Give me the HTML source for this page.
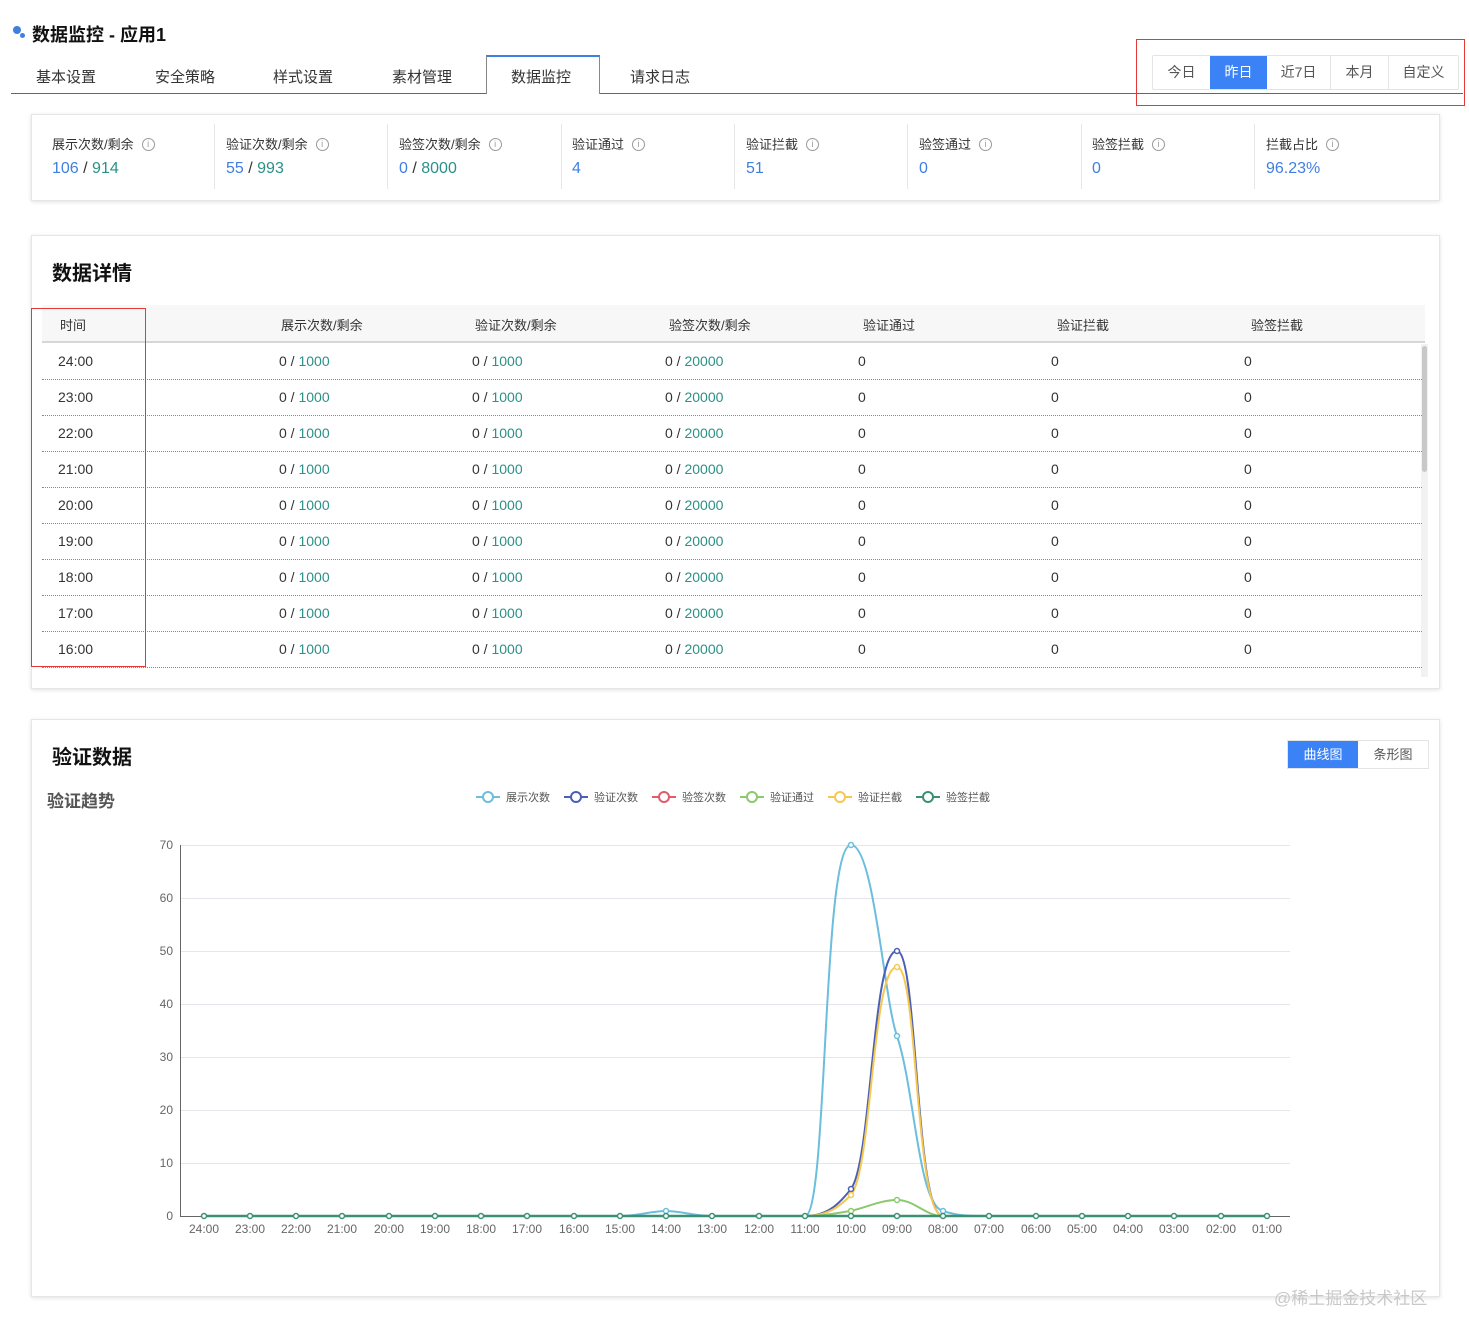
<!DOCTYPE html>
<html><head><meta charset="utf-8"><style>
*{box-sizing:border-box;margin:0;padding:0}
body{width:1469px;height:1339px;background:#fff;font-family:"Liberation Sans","Noto Sans CJK SC",sans-serif;color:#333;position:relative;overflow:hidden;font-size:14px}
.a{position:absolute}
.card{position:absolute;background:#fff;border:1px solid #e6e6e6;box-shadow:0 1px 4px rgba(0,0,0,.12)}
.blue{color:#3f7fe0}.teal{color:#2a9187}
.ic{display:inline-block;width:13px;height:13px;border:1px solid #999;border-radius:50%;font-size:9px;line-height:11px;text-align:center;color:#999;vertical-align:2px;margin-left:8px}
.row{position:absolute;left:42px;width:1380px;height:36px;border-bottom:1px dotted #888;font-size:14px}
.row span{position:absolute;top:9px}
</style></head><body>
<div class="a" style="left:13px;top:26px;width:8px;height:8px;border-radius:50%;background:#3f7fe0"></div>
<div class="a" style="left:20px;top:33px;width:5px;height:5px;border-radius:50%;background:#3f7fe0"></div>
<div class="a" style="left:32px;top:21px;font-size:18px;font-weight:bold;color:#111">数据监控 - 应用1</div>
<div class="a" style="left:11px;top:93px;width:1452px;height:1px;background:#666"></div>
<div class="a" style="left:486px;top:55px;width:114px;height:39px;border:1px solid #888;border-top:2px solid #3f7fe0;border-bottom:none;background:#fff"></div>
<div class="a" style="top:66px;left:36px;font-size:15px;color:#333">基本设置</div>
<div class="a" style="top:66px;left:155px;font-size:15px">安全策略</div>
<div class="a" style="top:66px;left:273px;font-size:15px">样式设置</div>
<div class="a" style="top:66px;left:392px;font-size:15px">素材管理</div>
<div class="a" style="top:66px;left:511px;font-size:15px">数据监控</div>
<div class="a" style="top:66px;left:630px;font-size:15px">请求日志</div>
<div class="a" style="left:1136px;top:39px;width:329px;height:67px;border:1px solid #e53935"></div>
<div class="a" style="left:1152px;top:55px;width:307px;height:35px;border:1px solid #e4e4e4;border-radius:2px;background:#fff;display:flex;font-size:14px;color:#555">
<div style="width:57px;text-align:center;line-height:33px">今日</div>
<div style="width:57px;text-align:center;line-height:33px;background:#3b82f6;color:#fff">昨日</div>
<div style="width:64px;text-align:center;line-height:33px;border-right:1px solid #e4e4e4">近7日</div>
<div style="width:58px;text-align:center;line-height:33px;border-right:1px solid #e4e4e4">本月</div>
<div style="flex:1;text-align:center;line-height:33px">自定义</div></div>

<div class="card" style="left:31px;top:114px;width:1409px;height:87px"></div>
<div class="a" style="top:134px;left:52px;font-size:13px">展示次数/剩余<span class="ic">i</span></div>
<div class="a" style="top:160px;left:52px;font-size:16px"><span class="blue">106</span> / <span class="teal">914</span></div>
<div class="a" style="left:214px;top:124px;width:1px;height:65px;background:#e6e6e6"></div>
<div class="a" style="top:134px;left:226px;font-size:13px">验证次数/剩余<span class="ic">i</span></div>
<div class="a" style="top:160px;left:226px;font-size:16px"><span class="blue">55</span> / <span class="teal">993</span></div>
<div class="a" style="left:387px;top:124px;width:1px;height:65px;background:#e6e6e6"></div>
<div class="a" style="top:134px;left:399px;font-size:13px">验签次数/剩余<span class="ic">i</span></div>
<div class="a" style="top:160px;left:399px;font-size:16px"><span class="blue">0</span> / <span class="teal">8000</span></div>
<div class="a" style="left:561px;top:124px;width:1px;height:65px;background:#e6e6e6"></div>
<div class="a" style="top:134px;left:572px;font-size:13px">验证通过<span class="ic">i</span></div>
<div class="a blue" style="top:160px;left:572px;font-size:16px">4</div>
<div class="a" style="left:734px;top:124px;width:1px;height:65px;background:#e6e6e6"></div>
<div class="a" style="top:134px;left:746px;font-size:13px">验证拦截<span class="ic">i</span></div>
<div class="a blue" style="top:160px;left:746px;font-size:16px">51</div>
<div class="a" style="left:907px;top:124px;width:1px;height:65px;background:#e6e6e6"></div>
<div class="a" style="top:134px;left:919px;font-size:13px">验签通过<span class="ic">i</span></div>
<div class="a blue" style="top:160px;left:919px;font-size:16px">0</div>
<div class="a" style="left:1081px;top:124px;width:1px;height:65px;background:#e6e6e6"></div>
<div class="a" style="top:134px;left:1092px;font-size:13px">验签拦截<span class="ic">i</span></div>
<div class="a blue" style="top:160px;left:1092px;font-size:16px">0</div>
<div class="a" style="left:1254px;top:124px;width:1px;height:65px;background:#e6e6e6"></div>
<div class="a" style="top:134px;left:1266px;font-size:13px">拦截占比<span class="ic">i</span></div>
<div class="a blue" style="top:160px;left:1266px;font-size:16px">96.23%</div>

<div class="card" style="left:31px;top:235px;width:1409px;height:454px"></div>
<div class="a" style="top:257px;left:52px;font-size:20px;font-weight:bold;color:#111">数据详情</div>
<div class="a" style="left:42px;top:305px;width:1383px;height:38px;background:#f7f7f7;border-bottom:2px solid #d6d6d6;font-size:13px">
<span class="a" style="left:18px;top:10px">时间</span>
<span class="a" style="left:239px;top:10px">展示次数/剩余</span>
<span class="a" style="left:433px;top:10px">验证次数/剩余</span>
<span class="a" style="left:627px;top:10px">验签次数/剩余</span>
<span class="a" style="left:821px;top:10px">验证通过</span>
<span class="a" style="left:1015px;top:10px">验证拦截</span>
<span class="a" style="left:1209px;top:10px">验签拦截</span></div>
<div class="a" style="left:1421px;top:344px;width:7px;height:333px;background:#f2f2f2"></div>
<div class="a" style="left:1422px;top:346px;width:5px;height:126px;background:#c8c8c8;border-radius:3px"></div>

<div class="row" style="top:344px"><span style="left:16px">24:00</span><span style="left:237px">0 / <b class="teal" style="font-weight:normal">1000</b></span><span style="left:430px">0 / <b class="teal" style="font-weight:normal">1000</b></span><span style="left:623px">0 / <b class="teal" style="font-weight:normal">20000</b></span><span style="left:816px">0</span><span style="left:1009px">0</span><span style="left:1202px">0</span></div>
<div class="row" style="top:380px"><span style="left:16px">23:00</span><span style="left:237px">0 / <b class="teal" style="font-weight:normal">1000</b></span><span style="left:430px">0 / <b class="teal" style="font-weight:normal">1000</b></span><span style="left:623px">0 / <b class="teal" style="font-weight:normal">20000</b></span><span style="left:816px">0</span><span style="left:1009px">0</span><span style="left:1202px">0</span></div>
<div class="row" style="top:416px"><span style="left:16px">22:00</span><span style="left:237px">0 / <b class="teal" style="font-weight:normal">1000</b></span><span style="left:430px">0 / <b class="teal" style="font-weight:normal">1000</b></span><span style="left:623px">0 / <b class="teal" style="font-weight:normal">20000</b></span><span style="left:816px">0</span><span style="left:1009px">0</span><span style="left:1202px">0</span></div>
<div class="row" style="top:452px"><span style="left:16px">21:00</span><span style="left:237px">0 / <b class="teal" style="font-weight:normal">1000</b></span><span style="left:430px">0 / <b class="teal" style="font-weight:normal">1000</b></span><span style="left:623px">0 / <b class="teal" style="font-weight:normal">20000</b></span><span style="left:816px">0</span><span style="left:1009px">0</span><span style="left:1202px">0</span></div>
<div class="row" style="top:488px"><span style="left:16px">20:00</span><span style="left:237px">0 / <b class="teal" style="font-weight:normal">1000</b></span><span style="left:430px">0 / <b class="teal" style="font-weight:normal">1000</b></span><span style="left:623px">0 / <b class="teal" style="font-weight:normal">20000</b></span><span style="left:816px">0</span><span style="left:1009px">0</span><span style="left:1202px">0</span></div>
<div class="row" style="top:524px"><span style="left:16px">19:00</span><span style="left:237px">0 / <b class="teal" style="font-weight:normal">1000</b></span><span style="left:430px">0 / <b class="teal" style="font-weight:normal">1000</b></span><span style="left:623px">0 / <b class="teal" style="font-weight:normal">20000</b></span><span style="left:816px">0</span><span style="left:1009px">0</span><span style="left:1202px">0</span></div>
<div class="row" style="top:560px"><span style="left:16px">18:00</span><span style="left:237px">0 / <b class="teal" style="font-weight:normal">1000</b></span><span style="left:430px">0 / <b class="teal" style="font-weight:normal">1000</b></span><span style="left:623px">0 / <b class="teal" style="font-weight:normal">20000</b></span><span style="left:816px">0</span><span style="left:1009px">0</span><span style="left:1202px">0</span></div>
<div class="row" style="top:596px"><span style="left:16px">17:00</span><span style="left:237px">0 / <b class="teal" style="font-weight:normal">1000</b></span><span style="left:430px">0 / <b class="teal" style="font-weight:normal">1000</b></span><span style="left:623px">0 / <b class="teal" style="font-weight:normal">20000</b></span><span style="left:816px">0</span><span style="left:1009px">0</span><span style="left:1202px">0</span></div>
<div class="row" style="top:632px"><span style="left:16px">16:00</span><span style="left:237px">0 / <b class="teal" style="font-weight:normal">1000</b></span><span style="left:430px">0 / <b class="teal" style="font-weight:normal">1000</b></span><span style="left:623px">0 / <b class="teal" style="font-weight:normal">20000</b></span><span style="left:816px">0</span><span style="left:1009px">0</span><span style="left:1202px">0</span></div>
<div class="a" style="left:31px;top:308px;width:115px;height:359px;border:1px solid #e53935"></div>

<div class="card" style="left:31px;top:719px;width:1409px;height:578px"></div>
<div class="a" style="top:741px;left:52px;font-size:20px;font-weight:bold;color:#111">验证数据</div>
<div class="a" style="top:787px;left:47px;font-size:17px;font-weight:bold;color:#555">验证趋势</div>
<div class="a" style="left:1287px;top:740px;width:142px;height:29px;border:1px solid #e4e4e4;display:flex;font-size:13px">
<div style="width:70px;background:#3b82f6;color:#fff;text-align:center;line-height:27px">曲线图</div>
<div style="flex:1;text-align:center;line-height:27px;color:#555">条形图</div></div>

<svg class="a" style="left:0;top:0" width="1469" height="1339" font-family="Liberation Sans,Noto Sans CJK SC,sans-serif">
<g font-size="11" fill="#555">
<g stroke-width="2" fill="#fff">
<line x1="476" y1="797" x2="500" y2="797" stroke="#6bbedc"/><circle cx="488" cy="797" r="5" stroke="#6bbedc"/>
<line x1="564" y1="797" x2="588" y2="797" stroke="#4a5fb5"/><circle cx="576" cy="797" r="5" stroke="#4a5fb5"/>
<line x1="652" y1="797" x2="676" y2="797" stroke="#e05a6a"/><circle cx="664" cy="797" r="5" stroke="#e05a6a"/>
<line x1="740" y1="797" x2="764" y2="797" stroke="#8cc870"/><circle cx="752" cy="797" r="5" stroke="#8cc870"/>
<line x1="828" y1="797" x2="852" y2="797" stroke="#f5c850"/><circle cx="840" cy="797" r="5" stroke="#f5c850"/>
<line x1="916" y1="797" x2="940" y2="797" stroke="#3a9070"/><circle cx="928" cy="797" r="5" stroke="#3a9070"/>
</g>
<text x="506" y="801">展示次数</text><text x="594" y="801">验证次数</text><text x="682" y="801">验签次数</text><text x="770" y="801">验证通过</text><text x="858" y="801">验证拦截</text><text x="946" y="801">验签拦截</text>
</g>
<g stroke="#e3e6ea" stroke-width="1">
<line x1="180" y1="845.5" x2="1290" y2="845.5"/><line x1="180" y1="898.5" x2="1290" y2="898.5"/><line x1="180" y1="951.5" x2="1290" y2="951.5"/><line x1="180" y1="1004.5" x2="1290" y2="1004.5"/><line x1="180" y1="1057.5" x2="1290" y2="1057.5"/><line x1="180" y1="1110.5" x2="1290" y2="1110.5"/><line x1="180" y1="1163.5" x2="1290" y2="1163.5"/>
</g>
<line x1="180.5" y1="845" x2="180.5" y2="1216" stroke="#666"/>
<line x1="180" y1="1216.5" x2="1290" y2="1216.5" stroke="#666"/>
<g font-size="12" fill="#666" text-anchor="end">
<text x="173" y="849">70</text><text x="173" y="902">60</text><text x="173" y="955">50</text><text x="173" y="1008">40</text><text x="173" y="1061">30</text><text x="173" y="1114">20</text><text x="173" y="1167">10</text><text x="173" y="1220">0</text>
</g>
<g font-size="12" fill="#666" text-anchor="middle">
<text x="204" y="1233">24:00</text><text x="250" y="1233">23:00</text><text x="296" y="1233">22:00</text><text x="342" y="1233">21:00</text><text x="389" y="1233">20:00</text><text x="435" y="1233">19:00</text><text x="481" y="1233">18:00</text><text x="527" y="1233">17:00</text><text x="574" y="1233">16:00</text><text x="620" y="1233">15:00</text><text x="666" y="1233">14:00</text><text x="712" y="1233">13:00</text><text x="759" y="1233">12:00</text><text x="805" y="1233">11:00</text><text x="851" y="1233">10:00</text><text x="897" y="1233">09:00</text><text x="943" y="1233">08:00</text><text x="989" y="1233">07:00</text><text x="1036" y="1233">06:00</text><text x="1082" y="1233">05:00</text><text x="1128" y="1233">04:00</text><text x="1174" y="1233">03:00</text><text x="1221" y="1233">02:00</text><text x="1267" y="1233">01:00</text>
</g>
<g fill="none" stroke-width="2">
<path stroke="#6bbedc" d="M204,1216 L620,1216 C640,1216 650,1211 666,1211 C682,1211 692,1216 712,1216 L805,1216 C828,1216 822,845 851,845 C874,845 884,1000 897,1036 C915,1090 918,1205 943,1211 C958,1216 970,1216 989,1216 L1267,1216"/>
<path stroke="#4a5fb5" d="M805,1216 C830,1216 842,1200 851,1189 C872,1160 872,951 897,951 C918,951 915,1216 943,1216"/>
<path stroke="#f5c850" d="M805,1216 C830,1216 842,1204 851,1195 C872,1170 872,967 897,967 C918,967 915,1216 943,1216"/>
<path stroke="#8cc870" d="M805,1216 C825,1216 835,1213 851,1211 C870,1206 882,1200 897,1200 C915,1200 925,1216 943,1216"/>
<path stroke="#3a9070" stroke-width="2.5" d="M204,1216 L1267,1216"/>
</g>
<g fill="#fff" stroke-width="1.5">
<circle cx="851" cy="845" r="2.5" stroke="#6bbedc"/><circle cx="897" cy="1036" r="2.5" stroke="#6bbedc"/><circle cx="666" cy="1211" r="2.5" stroke="#6bbedc"/><circle cx="943" cy="1211" r="2.5" stroke="#6bbedc"/>
<circle cx="897" cy="951" r="2.5" stroke="#4a5fb5"/><circle cx="851" cy="1189" r="2.5" stroke="#4a5fb5"/>
<circle cx="897" cy="967" r="2.5" stroke="#f5c850"/><circle cx="851" cy="1195" r="2.5" stroke="#f5c850"/>
<circle cx="897" cy="1200" r="2.5" stroke="#8cc870"/><circle cx="851" cy="1211" r="2.5" stroke="#8cc870"/>
</g>
<g fill="#fff" stroke="#3a9070" stroke-width="1.5">
<circle cx="204" cy="1216" r="2.5"/><circle cx="250" cy="1216" r="2.5"/><circle cx="296" cy="1216" r="2.5"/><circle cx="342" cy="1216" r="2.5"/><circle cx="389" cy="1216" r="2.5"/><circle cx="435" cy="1216" r="2.5"/><circle cx="481" cy="1216" r="2.5"/><circle cx="527" cy="1216" r="2.5"/><circle cx="574" cy="1216" r="2.5"/><circle cx="620" cy="1216" r="2.5"/><circle cx="666" cy="1216" r="2.5"/><circle cx="712" cy="1216" r="2.5"/><circle cx="759" cy="1216" r="2.5"/><circle cx="805" cy="1216" r="2.5"/><circle cx="851" cy="1216" r="2.5"/><circle cx="897" cy="1216" r="2.5"/><circle cx="943" cy="1216" r="2.5"/><circle cx="989" cy="1216" r="2.5"/><circle cx="1036" cy="1216" r="2.5"/><circle cx="1082" cy="1216" r="2.5"/><circle cx="1128" cy="1216" r="2.5"/><circle cx="1174" cy="1216" r="2.5"/><circle cx="1221" cy="1216" r="2.5"/><circle cx="1267" cy="1216" r="2.5"/>
</g>
</svg>
<div class="a" style="left:1274px;top:1284px;font-size:17px;color:#c8c8c8">@稀土掘金技术社区</div>
</body></html>
